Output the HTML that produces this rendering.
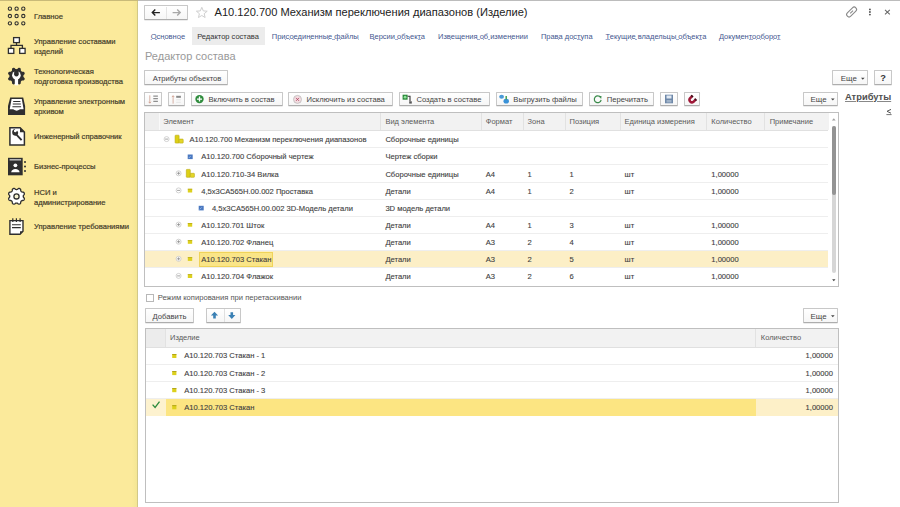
<!DOCTYPE html><html><head><meta charset="utf-8"><style>
*{box-sizing:border-box;margin:0;padding:0}
html,body{width:900px;height:507px;overflow:hidden;background:#fff;font-family:"Liberation Sans",sans-serif;font-size:7.5px;color:#333}
.a{position:absolute;white-space:nowrap}
svg{position:absolute;overflow:visible}
.st{position:absolute;left:34px;color:#3b3626;-webkit-text-stroke:.2px #4a4530;font-size:7.6px;line-height:9.5px;white-space:nowrap}
.btn{position:absolute;border:1px solid #c8c8c8;border-bottom-color:#adadad;border-radius:1px;background:linear-gradient(#fff,#f6f6f6);box-shadow:0 .6px .6px rgba(0,0,0,.15);color:#444;white-space:nowrap}
.lnk{position:absolute;color:#44578f;text-decoration:underline;text-decoration-color:#9eabcf;text-underline-offset:.35px;text-decoration-thickness:.7px;white-space:nowrap}
.tbl{position:absolute;border:1px solid #bfbfbf;background:#fff;overflow:hidden}
.hc{position:absolute;height:18px;line-height:18px;color:#5a5a5a;white-space:nowrap}
.vs{position:absolute;width:1px;background:#e2e2e2}
.hs{position:absolute;height:1px;background:#eeeeee}
.c{position:absolute;color:#3a3a3a;-webkit-text-stroke:.12px #555;white-space:nowrap;line-height:10px;font-size:7.6px}
</style></head><body>
<div class="a" style="left:0;top:0;width:900px;height:1.2px;background:#bcbcbc"></div>
<div class="a" style="left:0;top:0;width:138px;height:1.2px;background:#c9ba78"></div>
<div class="a" style="left:0;top:1px;width:137px;height:506px;background:#fbea9b"></div>
<div class="a" style="left:132px;top:1px;width:5px;height:506px;background:linear-gradient(90deg,#fbea9b,#f4e694)"></div>
<div class="a" style="left:137px;top:1px;width:1px;height:506px;background:#d2c888"></div>
<div class="st" style="top:12.2px">Главное</div>
<div class="st" style="top:37.4px">Управление составами<br>изделий</div>
<div class="st" style="top:67.4px">Технологическая<br>подготовка производства</div>
<div class="st" style="top:97.4px">Управление электронным<br>архивом</div>
<div class="st" style="top:131.8px">Инженерный справочник</div>
<div class="st" style="top:162.2px">Бизнес-процессы</div>
<div class="st" style="top:188.4px">НСИ и<br>администрирование</div>
<div class="st" style="top:222.3px">Управление требованиями</div>

<svg style="left:0;top:0" width="40" height="240" viewBox="0 0 40 240">
 <g fill="none" stroke="#2f2f2f" stroke-width="1.05">
  <circle cx="9.9" cy="8.7" r="1.65"/><circle cx="16.6" cy="8.7" r="1.65"/><circle cx="23.3" cy="8.7" r="1.65"/>
  <circle cx="9.9" cy="16" r="1.65"/><circle cx="16.6" cy="16" r="1.65"/><circle cx="23.3" cy="16" r="1.65"/>
  <circle cx="9.9" cy="23.3" r="1.65"/><circle cx="16.6" cy="23.3" r="1.65"/><circle cx="23.3" cy="23.3" r="1.65"/>
 </g>
 <g stroke="#2f2f2f" stroke-width="1.3" fill="#fff">
  <rect x="13.6" y="37.6" width="5.8" height="5"/>
  <rect x="8.4" y="48.4" width="5.4" height="5"/>
  <rect x="19.7" y="48.4" width="5.4" height="5"/>
  <path d="M16.5 42.6V45.4M11 48.4V45.4H22.4V48.4" fill="none"/>
 </g>
 <path fill="#2f2f2f" d="M23.35 76.10L23.37 76.37L23.44 76.65L23.56 76.95L23.74 77.26L24.15 77.64L24.54 78.05L24.67 78.43L24.71 78.80L24.68 79.15L24.58 79.49L24.41 79.79L24.18 80.07L23.90 80.30L23.54 80.47L22.97 80.49L22.41 80.47L22.06 80.56L21.77 80.69L21.52 80.84L21.31 81.01L21.14 81.22L20.99 81.47L20.86 81.76L20.77 82.11L20.79 82.67L20.77 83.24L20.60 83.60L20.37 83.88L20.09 84.11L19.79 84.28L19.45 84.38L19.10 84.41L18.73 84.37L18.35 84.24L17.94 83.85L17.56 83.44L17.25 83.26L16.95 83.14L16.67 83.07L16.40 83.05L16.13 83.07L15.85 83.14L15.55 83.26L15.24 83.44L14.86 83.85L14.45 84.24L14.07 84.37L13.70 84.41L13.35 84.38L13.01 84.28L12.71 84.11L12.43 83.88L12.20 83.60L12.03 83.24L12.01 82.67L12.03 82.11L11.94 81.76L11.81 81.47L11.66 81.22L11.49 81.01L11.28 80.84L11.03 80.69L10.74 80.56L10.39 80.47L9.83 80.49L9.26 80.47L8.90 80.30L8.62 80.07L8.39 79.79L8.22 79.49L8.12 79.15L8.09 78.80L8.13 78.43L8.26 78.05L8.65 77.64L9.06 77.26L9.24 76.95L9.36 76.65L9.43 76.37L9.45 76.10L9.43 75.83L9.36 75.55L9.24 75.25L9.06 74.94L8.65 74.56L8.26 74.15L8.13 73.77L8.09 73.40L8.12 73.05L8.22 72.71L8.39 72.41L8.62 72.13L8.90 71.90L9.26 71.73L9.83 71.71L10.39 71.73L10.74 71.64L11.03 71.51L11.28 71.36L11.49 71.19L11.66 70.98L11.81 70.73L11.94 70.44L12.03 70.09L12.01 69.53L12.03 68.96L12.20 68.60L12.43 68.32L12.71 68.09L13.01 67.92L13.35 67.82L13.70 67.79L14.07 67.83L14.45 67.96L14.86 68.35L15.24 68.76L15.55 68.94L15.85 69.06L16.13 69.13L16.40 69.15L16.67 69.13L16.95 69.06L17.25 68.94L17.56 68.76L17.94 68.35L18.35 67.96L18.73 67.83L19.10 67.79L19.45 67.82L19.79 67.92L20.09 68.09L20.37 68.32L20.60 68.60L20.77 68.96L20.79 69.53L20.77 70.09L20.86 70.44L20.99 70.73L21.14 70.98L21.31 71.19L21.52 71.36L21.77 71.51L22.06 71.64L22.41 71.73L22.97 71.71L23.54 71.73L23.90 71.90L24.18 72.13L24.41 72.41L24.58 72.71L24.68 73.05L24.71 73.40L24.67 73.77L24.54 74.15L24.15 74.56L23.74 74.94L23.56 75.25L23.44 75.55L23.37 75.83z"/>
 <circle cx="16.4" cy="75.3" r="4.3" fill="#fff"/><circle cx="16.4" cy="74.3" r="2.2" fill="#2f2f2f"/><rect x="14.2" y="69.5" width="4.4" height="4.8" fill="#2f2f2f"/><rect x="14.8" y="77" width="3.3" height="8.3" fill="#fff"/>
 <path fill="#2f2f2f" d="M10.2 97.6h13l1.9 8.5v8.8H8v-8.8z"/>
 <path fill="#fff" d="M11.6 99h10.2l1.8 10.2H9.7z"/>
 <path stroke="#2f2f2f" stroke-width="1.05" d="M13.2 101.4h7.2M12.8 104h8M12.4 106.7h8.7"/>
 <path fill="#fff" d="M13.6 109.1h6v.5q-3 2.2-6 0z"/>
 <path fill="#fff" stroke="#2f2f2f" stroke-width="1.5" d="M9.9 127.8h10.2l4.3 4.3v12.8H9.9z"/>
 <path fill="#2f2f2f" d="M20 127.8l4.4 4.4h-4.4z"/>
 <path fill="none" stroke="#2f2f2f" stroke-width="1.9" d="M16 134.2l5.6 5.9"/>
 <path fill="#2f2f2f" d="M12.2 132.4a3 3 0 0 0 4.6 2.8a3 3 0 0 0 0.4-4.4l-1.4 1.5-1.6-.3-.3-1.5 1.4-1.5a3 3 0 0 0-3.1 3.4z"/>
 <rect x="8" y="157.8" width="14.7" height="17.5" fill="#2f2f2f"/>
 <rect x="9.6" y="159.3" width="11.5" height="1.1" fill="#eee"/>
 <circle cx="15.4" cy="165.3" r="1.9" fill="#fff"/>
 <path fill="#fff" d="M11.2 172.2q.5-3 4.2-3.2 3.7.2 4.2 3.2z"/>
 <circle cx="25" cy="162" r="1" fill="#2f2f2f"/><circle cx="25" cy="166.5" r="1" fill="#2f2f2f"/><circle cx="25" cy="170.9" r="1" fill="#2f2f2f"/>
 <path fill="#fff" stroke="#2f2f2f" stroke-width="1.3" d="M23.25 196.30L23.27 196.57L23.32 196.84L23.42 197.12L23.57 197.42L23.90 197.77L24.23 198.15L24.33 198.51L24.35 198.85L24.31 199.18L24.21 199.50L24.06 199.79L23.85 200.05L23.59 200.27L23.27 200.45L22.78 200.49L22.29 200.51L21.97 200.61L21.71 200.75L21.47 200.90L21.27 201.07L21.10 201.27L20.95 201.51L20.81 201.77L20.71 202.09L20.69 202.58L20.65 203.07L20.47 203.39L20.25 203.65L19.99 203.86L19.70 204.01L19.38 204.11L19.05 204.15L18.71 204.13L18.35 204.03L17.97 203.70L17.62 203.37L17.32 203.22L17.04 203.12L16.77 203.07L16.50 203.05L16.23 203.07L15.96 203.12L15.68 203.22L15.38 203.37L15.03 203.70L14.65 204.03L14.29 204.13L13.95 204.15L13.62 204.11L13.30 204.01L13.01 203.86L12.75 203.65L12.53 203.39L12.35 203.07L12.31 202.58L12.29 202.09L12.19 201.77L12.05 201.51L11.90 201.27L11.73 201.07L11.53 200.90L11.29 200.75L11.03 200.61L10.71 200.51L10.22 200.49L9.73 200.45L9.41 200.27L9.15 200.05L8.94 199.79L8.79 199.50L8.69 199.18L8.65 198.85L8.67 198.51L8.77 198.15L9.10 197.77L9.43 197.42L9.58 197.12L9.68 196.84L9.73 196.57L9.75 196.30L9.73 196.03L9.68 195.76L9.58 195.48L9.43 195.18L9.10 194.83L8.77 194.45L8.67 194.09L8.65 193.75L8.69 193.42L8.79 193.10L8.94 192.81L9.15 192.55L9.41 192.33L9.73 192.15L10.22 192.11L10.71 192.09L11.03 191.99L11.29 191.85L11.53 191.70L11.73 191.53L11.90 191.33L12.05 191.09L12.19 190.83L12.29 190.51L12.31 190.02L12.35 189.53L12.53 189.21L12.75 188.95L13.01 188.74L13.30 188.59L13.62 188.49L13.95 188.45L14.29 188.47L14.65 188.57L15.03 188.90L15.38 189.23L15.68 189.38L15.96 189.48L16.23 189.53L16.50 189.55L16.77 189.53L17.04 189.48L17.32 189.38L17.62 189.23L17.97 188.90L18.35 188.57L18.71 188.47L19.05 188.45L19.38 188.49L19.70 188.59L19.99 188.74L20.25 188.95L20.47 189.21L20.65 189.53L20.69 190.02L20.71 190.51L20.81 190.83L20.95 191.09L21.10 191.33L21.27 191.53L21.47 191.70L21.71 191.85L21.97 191.99L22.29 192.09L22.78 192.11L23.27 192.15L23.59 192.33L23.85 192.55L24.06 192.81L24.21 193.10L24.31 193.42L24.35 193.75L24.33 194.09L24.23 194.45L23.90 194.83L23.57 195.18L23.42 195.48L23.32 195.76L23.27 196.03z"/>
 <circle cx="16.5" cy="196.4" r="2.6" fill="#f5f2d0" stroke="#2f2f2f" stroke-width="1.3"/>
 <path fill="#fff" stroke="#2f2f2f" stroke-width="1.4" d="M9.9 220.6h13.1v10.6l-3 3h-10.1z"/>
 <path fill="#2f2f2f" d="M23 231.2l-3 3v-3z"/>
 <path stroke="#2f2f2f" stroke-width="1.2" d="M12.8 218.3v3.6M16.4 218.3v3.6M20.1 218.3v3.6"/>
 <path stroke="#2f2f2f" stroke-width="1.1" d="M12 224.8h8.8M12 227.6h8.8"/>
</svg>
<div class="btn" style="left:144.2px;top:5.2px;width:43.8px;height:14.4px;border-radius:1px"></div>
<div class="a" style="left:166px;top:6.5px;width:1px;height:12px;background:#e4e4e4"></div>
<svg style="left:0;top:0" width="900" height="30">
 <path d="M152.3 12.6h7.6M155.3 9.6l-3 3 3 3" fill="none" stroke="#222" stroke-width="1.4"/>
 <path d="M172.6 12.6h7.6M177.2 9.6l3 3-3 3" fill="none" stroke="#a8a8a8" stroke-width="1.4"/>
 <path d="M201.8 7.3l1.5 3.6 3.9.3-3 2.5.9 3.8-3.3-2-3.3 2 .9-3.8-3-2.5 3.9-.3z" fill="none" stroke="#cfcfcf" stroke-width="1"/>
 <g fill="none" stroke="#888" stroke-width="1.05" transform="rotate(-45 851.6 12)">
  <rect x="845.6" y="9.6" width="12" height="4.8" rx="2.4"/>
  <path d="M849.6 12h4"/>
 </g>
 <g fill="#555"><circle cx="869.9" cy="9.4" r=".95"/><circle cx="869.9" cy="12" r=".95"/><circle cx="869.9" cy="14.6" r=".95"/></g>
 <path d="M885 9.8l4.8 4.6M889.8 9.8l-4.8 4.6" stroke="#666" stroke-width="1.05"/>
</svg>
<div class="a" style="left:214.5px;top:6.3px;font-size:11.1px;line-height:13px;color:#222">A10.120.700 Механизм переключения диапазонов (Изделие)</div>
<div class="a" style="left:191.6px;top:26.8px;width:73px;height:18.6px;background:#ececec"></div>
<div class="a" style="left:197.2px;top:31.6px;line-height:10px;color:#333">Редактор состава</div>
<div class="lnk" style="left:150.7px;top:31.5px;line-height:10px">Основное</div>
<div class="lnk" style="left:271.8px;top:31.5px;line-height:10px">Присоединенные файлы</div>
<div class="lnk" style="left:369.5px;top:31.5px;line-height:10px">Версии объекта</div>
<div class="lnk" style="left:438.0px;top:31.5px;line-height:10px">Извещения об изменении</div>
<div class="lnk" style="left:540.9px;top:31.5px;line-height:10px">Права доступа</div>
<div class="lnk" style="left:605.6px;top:31.5px;line-height:10px">Текущие владельцы объекта</div>
<div class="lnk" style="left:718.9px;top:31.5px;line-height:10px">Документооборот</div>
<div class="a" style="left:145px;top:50.3px;font-size:11px;line-height:13px;color:#999">Редактор состава</div>
<div class="btn" style="left:144.3px;top:70.3px;width:84.2px;height:15.2px"></div><div class="a" style="left:152.8px;top:73.7px;line-height:10px;color:#444;font-size:7.65px;">Атрибуты объектов</div>
<div class="btn" style="left:832.1px;top:70.3px;width:36.2px;height:15.0px"></div><div class="a" style="left:840.8px;top:73.6px;line-height:10px;color:#444;font-size:7.9px;">Еще</div>
<svg style="left:0;top:0" width="900" height="507"><path d="M861.0 77.8h3.6l-1.8 2.0z" fill="#444"/></svg>
<div class="btn" style="left:874.2px;top:70.3px;width:17.5px;height:15.0px"></div>
<div class="a" style="left:880.3px;top:72.6px;font-weight:bold;font-size:9.3px;line-height:10px;color:#333">?</div>
<div class="btn" style="left:144.3px;top:91.6px;width:17.5px;height:14.8px"></div>
<div class="btn" style="left:168.0px;top:91.6px;width:16.8px;height:14.8px"></div>
<div class="btn" style="left:191.2px;top:91.6px;width:92.3px;height:14.8px"></div><div class="a" style="left:208.4px;top:94.8px;line-height:10px;color:#444;font-size:7.65px;">Включить в состав</div>
<div class="btn" style="left:288.2px;top:91.6px;width:104.4px;height:14.8px"></div><div class="a" style="left:306.5px;top:94.8px;line-height:10px;color:#444;font-size:7.65px;">Исключить из состава</div>
<div class="btn" style="left:399.2px;top:91.6px;width:90.6px;height:14.8px"></div><div class="a" style="left:416.4px;top:94.8px;line-height:10px;color:#444;font-size:7.65px;">Создать в составе</div>
<div class="btn" style="left:495.7px;top:91.6px;width:87.6px;height:14.8px"></div><div class="a" style="left:513.3px;top:94.8px;line-height:10px;color:#444;font-size:7.65px;">Выгрузить файлы</div>
<div class="btn" style="left:588.7px;top:91.6px;width:65.6px;height:14.8px"></div><div class="a" style="left:606.7px;top:94.8px;line-height:10px;color:#444;font-size:7.65px;">Перечитать</div>
<div class="btn" style="left:660.3px;top:91.6px;width:17.4px;height:14.8px"></div>
<div class="btn" style="left:683.7px;top:91.6px;width:16.6px;height:14.8px"></div>
<div class="btn" style="left:802.8px;top:91.6px;width:35.4px;height:14.8px"></div><div class="a" style="left:810.5px;top:94.8px;line-height:10px;color:#444;font-size:7.9px;">Еще</div>
<svg style="left:0;top:0" width="900" height="507"><path d="M831.0 98.6h3.6l-1.8 2.0z" fill="#444"/></svg>
<div class="a" style="left:845px;top:92.2px;font-weight:bold;font-size:9.35px;line-height:11px;color:#505050;text-decoration:underline;text-decoration-color:#888">Атрибуты</div>
<svg style="left:0;top:0" width="900" height="120"><path d="M891 109.4l-4 1.9 4 1.9" fill="none" stroke="#555" stroke-width="1"/><path d="M886.4 114.6h5.2" stroke="#666" stroke-width=".9"/></svg>
<svg style="left:0;top:0" width="900" height="120">
 <path d="M149.8 95.3v7.8M148.6 101.8l1.2 1.4 1.2-1.4" fill="none" stroke="#c89080" stroke-width=".7"/>
 <path d="M153.3 96.1h4.6M153.3 98.7h4.6M153.3 101.3h4.6" stroke="#8f8f8f" stroke-width="1.2"/>
 <path d="M173.1 103.6v-7.8M171.9 97.1l1.2-1.4 1.2 1.4" fill="none" stroke="#c89080" stroke-width=".7"/>
 <path d="M176.2 96.8h4.7" stroke="#888" stroke-width="2"/>
 <path d="M176.2 99.8h4.7M176.2 102.3h4.7" stroke="#e2e2e2" stroke-width=".9"/>
 <circle cx="199.5" cy="99.1" r="4.2" fill="#2e8c3c"/>
 <path d="M199.5 96.6v5M197 99.1h5" stroke="#fff" stroke-width="1.3"/>
 <circle cx="297.5" cy="99.4" r="4" fill="#f3dce0" stroke="#bbb" stroke-width=".8"/>
 <path d="M296 97.9l3 3M299 97.9l-3 3" stroke="#b04060" stroke-width=".8"/>
 <rect x="402.6" y="94.7" width="5" height="5" fill="#2a8a3a"/>
 <circle cx="405.1" cy="97.2" r="1.4" fill="#8fe09a"/>
 <path d="M407.6 96.2h2.4v5" fill="none" stroke="#333" stroke-width="1.1"/>
 <rect x="409.2" y="101.3" width="2.6" height="2.3" fill="#555"/>
 <ellipse cx="501.6" cy="96.8" rx="2.4" ry="2" fill="#4a9ad8"/>
 <ellipse cx="506.2" cy="101.2" rx="2.7" ry="2.4" fill="#3a92d8"/>
 <path d="M506.2 99.5v-3.6" stroke="#3a9a48" stroke-width="1.4"/>
 <path d="M600.5 97.3a3.4 3.4 0 1 0 .6 2.5" fill="none" stroke="#3a8a4a" stroke-width="1.2"/>
 <path d="M599 95.8l2.6.5-.5 2.6z" fill="#3a8a4a"/>
 <rect x="665" y="94.7" width="8" height="8.6" fill="#6d87a8"/>
 <rect x="666.5" y="95.5" width="5" height="3" fill="#dfe8f2"/>
 <rect x="666.5" y="100" width="5" height="2.5" fill="#9fb2c8"/>
 <path d="M692.6 95.6L690 98.3a2.5 2.5 0 0 0 3.5 3.5l2.6-2.7" fill="none" stroke="#a01838" stroke-width="2.5"/><path d="M692.6 95.6l-1 1M696.1 99.1l-1 1" stroke="#3a1018" stroke-width="2.5"/>
</svg>
<div class="tbl" style="left:144.4px;top:112.2px;width:694.5px;height:174.8px"></div>
<div class="a" style="left:145.4px;top:113.2px;width:683.4px;height:17.3px;background:#f2f2f2"></div>
<div class="a" style="left:145.4px;top:113.2px;width:13.5px;height:17.3px;background:#eeeeee"></div>
<div class="a" style="left:145.4px;top:130px;width:683px;height:1px;background:#e0e0e0"></div>
<div class="vs" style="left:159.0px;top:113.2px;height:17px;background:#f9f9f9"></div>
<div class="hc" style="left:163.3px;top:112.7px">Элемент</div>
<div class="vs" style="left:379.7px;top:113.2px;height:17px;"></div>
<div class="hc" style="left:385.4px;top:112.7px">Вид элемента</div>
<div class="vs" style="left:480.8px;top:113.2px;height:17px;"></div>
<div class="hc" style="left:485.7px;top:112.7px">Формат</div>
<div class="vs" style="left:522.7px;top:113.2px;height:17px;"></div>
<div class="hc" style="left:527.6px;top:112.7px">Зона</div>
<div class="vs" style="left:564.6px;top:113.2px;height:17px;"></div>
<div class="hc" style="left:569.5px;top:112.7px">Позиция</div>
<div class="vs" style="left:619.7px;top:113.2px;height:17px;"></div>
<div class="hc" style="left:624.6px;top:112.7px">Единица измерения</div>
<div class="vs" style="left:706.4px;top:113.2px;height:17px;"></div>
<div class="hc" style="left:711.3px;top:112.7px">Количество</div>
<div class="vs" style="left:764.2px;top:113.2px;height:17px;"></div>
<div class="hc" style="left:769.7px;top:112.7px">Примечание</div>
<div class="vs" style="left:828.5px;top:113.2px;height:17px;"></div>
<div class="hs" style="left:145.4px;top:147.2px;width:683px"></div>
<div class="c" style="left:189.4px;top:135.3px">A10.120.700 Механизм переключения диапазонов</div>
<div class="c" style="left:385.4px;top:135.3px">Сборочные единицы</div>
<div class="hs" style="left:145.4px;top:164.3px;width:683px"></div>
<div class="c" style="left:201.2px;top:152.4px">A10.120.700 Сборочный чертеж</div>
<div class="c" style="left:385.4px;top:152.4px">Чертеж сборки</div>
<div class="hs" style="left:145.4px;top:181.5px;width:683px"></div>
<div class="c" style="left:201.2px;top:169.5px">A10.120.710-34 Вилка</div>
<div class="c" style="left:385.4px;top:169.5px">Сборочные единицы</div>
<div class="c" style="left:485.7px;top:169.5px">A4</div>
<div class="c" style="left:527.6px;top:169.5px">1</div>
<div class="c" style="left:569.5px;top:169.5px">1</div>
<div class="c" style="left:624.6px;top:169.5px">шт</div>
<div class="c" style="left:711.3px;top:169.5px">1,00000</div>
<div class="hs" style="left:145.4px;top:198.6px;width:683px"></div>
<div class="c" style="left:201.2px;top:186.6px">4,5x3CA565H.00.002 Проставка</div>
<div class="c" style="left:385.4px;top:186.6px">Детали</div>
<div class="c" style="left:485.7px;top:186.6px">A4</div>
<div class="c" style="left:527.6px;top:186.6px">1</div>
<div class="c" style="left:569.5px;top:186.6px">2</div>
<div class="c" style="left:624.6px;top:186.6px">шт</div>
<div class="c" style="left:711.3px;top:186.6px">1,00000</div>
<div class="hs" style="left:145.4px;top:215.7px;width:683px"></div>
<div class="c" style="left:211.9px;top:203.7px">4,5x3CA565H.00.002 3D-Модель детали</div>
<div class="c" style="left:385.4px;top:203.7px">3D модель детали</div>
<div class="hs" style="left:145.4px;top:232.8px;width:683px"></div>
<div class="c" style="left:201.2px;top:220.8px">A10.120.701 Шток</div>
<div class="c" style="left:385.4px;top:220.8px">Детали</div>
<div class="c" style="left:485.7px;top:220.8px">A4</div>
<div class="c" style="left:527.6px;top:220.8px">1</div>
<div class="c" style="left:569.5px;top:220.8px">3</div>
<div class="c" style="left:624.6px;top:220.8px">шт</div>
<div class="c" style="left:711.3px;top:220.8px">1,00000</div>
<div class="hs" style="left:145.4px;top:249.8px;width:683px"></div>
<div class="c" style="left:201.2px;top:237.9px">A10.120.702 Фланец</div>
<div class="c" style="left:385.4px;top:237.9px">Детали</div>
<div class="c" style="left:485.7px;top:237.9px">A3</div>
<div class="c" style="left:527.6px;top:237.9px">2</div>
<div class="c" style="left:569.5px;top:237.9px">4</div>
<div class="c" style="left:624.6px;top:237.9px">шт</div>
<div class="c" style="left:711.3px;top:237.9px">1,00000</div>
<div class="a" style="left:145.4px;top:250.9px;width:683px;height:16.6px;background:#fcefc6"></div>
<div class="a" style="left:198.5px;top:251.9px;width:74.5px;height:15px;background:#fae587;border:1px solid #efd35a"></div>
<div class="hs" style="left:145.4px;top:267.0px;width:683px"></div>
<div class="c" style="left:201.2px;top:255.0px">A10.120.703 Стакан</div>
<div class="c" style="left:385.4px;top:255.0px">Детали</div>
<div class="c" style="left:485.7px;top:255.0px">A3</div>
<div class="c" style="left:527.6px;top:255.0px">2</div>
<div class="c" style="left:569.5px;top:255.0px">5</div>
<div class="c" style="left:624.6px;top:255.0px">шт</div>
<div class="c" style="left:711.3px;top:255.0px">1,00000</div>
<div class="c" style="left:201.2px;top:272.1px">A10.120.704 Флажок</div>
<div class="c" style="left:385.4px;top:272.1px">Детали</div>
<div class="c" style="left:485.7px;top:272.1px">A3</div>
<div class="c" style="left:527.6px;top:272.1px">2</div>
<div class="c" style="left:569.5px;top:272.1px">6</div>
<div class="c" style="left:624.6px;top:272.1px">шт</div>
<div class="c" style="left:711.3px;top:272.1px">1,00000</div>
<svg style="left:0;top:0" width="900" height="300">
<circle cx="166.6" cy="139.1" r="2.5" fill="#fff" stroke="#c4c4c4" stroke-width=".75"/>
<path d="M165.1 139.1h3" stroke="#8c8c8c" stroke-width=".8"/>
<g transform="translate(179.2 139.3)"><rect x="-4.1" y="-4.1" width="4" height="7.9" rx=".6" fill="#ddd015" stroke="#b8aa10" stroke-width=".6"/><rect x="-0.1" y="-0.2" width="4.1" height="4" rx=".6" fill="#e4d628" stroke="#b8aa10" stroke-width=".6"/></g>
<rect x="187.7" y="154.5" width="5" height="4.6" fill="#4a78c0"/><path d="M188.7 158.1l2 -2" stroke="#9ec0ee" stroke-width=".8"/>
<circle cx="178.6" cy="173.3" r="2.5" fill="#fff" stroke="#c4c4c4" stroke-width=".75"/>
<path d="M177.1 173.3h3" stroke="#8c8c8c" stroke-width=".8"/>
<path d="M178.6 171.8v3" stroke="#8c8c8c" stroke-width=".8"/>
<g transform="translate(190.4 173.5)"><rect x="-4.1" y="-4.1" width="4" height="7.9" rx=".6" fill="#ddd015" stroke="#b8aa10" stroke-width=".6"/><rect x="-0.1" y="-0.2" width="4.1" height="4" rx=".6" fill="#e4d628" stroke="#b8aa10" stroke-width=".6"/></g>
<circle cx="178.6" cy="190.4" r="2.5" fill="#fff" stroke="#c4c4c4" stroke-width=".75"/>
<path d="M177.1 190.4h3" stroke="#8c8c8c" stroke-width=".8"/>
<rect x="187.8" y="188.8" width="4.4" height="3.7" fill="#ddd01e"/><rect x="187.8" y="188.8" width="4.4" height=".7" fill="#b4a614"/>
<rect x="198.7" y="205.8" width="5" height="4.6" fill="#4a78c0"/><path d="M199.7 209.4l2 -2" stroke="#9ec0ee" stroke-width=".8"/>
<circle cx="178.6" cy="224.6" r="2.5" fill="#fff" stroke="#c4c4c4" stroke-width=".75"/>
<path d="M177.1 224.6h3" stroke="#8c8c8c" stroke-width=".8"/>
<path d="M178.6 223.1v3" stroke="#8c8c8c" stroke-width=".8"/>
<rect x="187.8" y="223.0" width="4.4" height="3.7" fill="#ddd01e"/><rect x="187.8" y="223.0" width="4.4" height=".7" fill="#b4a614"/>
<circle cx="178.6" cy="241.7" r="2.5" fill="#fff" stroke="#c4c4c4" stroke-width=".75"/>
<path d="M177.1 241.7h3" stroke="#8c8c8c" stroke-width=".8"/>
<path d="M178.6 240.2v3" stroke="#8c8c8c" stroke-width=".8"/>
<rect x="187.8" y="240.1" width="4.4" height="3.7" fill="#ddd01e"/><rect x="187.8" y="240.1" width="4.4" height=".7" fill="#b4a614"/>
<circle cx="178.6" cy="258.8" r="2.5" fill="#fff" stroke="#c4c4c4" stroke-width=".75"/>
<path d="M177.1 258.8h3" stroke="#8c8c8c" stroke-width=".8"/>
<path d="M178.6 257.3v3" stroke="#8c8c8c" stroke-width=".8"/>
<rect x="187.8" y="257.2" width="4.4" height="3.7" fill="#ddd01e"/><rect x="187.8" y="257.2" width="4.4" height=".7" fill="#b4a614"/>
<circle cx="178.6" cy="275.9" r="2.5" fill="#fff" stroke="#c4c4c4" stroke-width=".75"/>
<path d="M177.1 275.9h3" stroke="#8c8c8c" stroke-width=".8"/>
<rect x="187.8" y="274.3" width="4.4" height="3.7" fill="#ddd01e"/><rect x="187.8" y="274.3" width="4.4" height=".7" fill="#b4a614"/>
</svg>
<div class="a" style="left:829px;top:113.2px;width:8.9px;height:172.8px;background:#fff"></div>
<div class="a" style="left:831.8px;top:126.3px;width:4.2px;height:147px;background:#d6d6d6;border-radius:2.1px"></div>
<div class="a" style="left:831.8px;top:126.3px;width:4.2px;height:68.7px;background:#939393;border-radius:2.1px"></div>
<svg style="left:0;top:0" width="900" height="507"><path d="M831.9 120.6h3.8l-1.9-2.3z" fill="#a0a0a0"/></svg>
<svg style="left:0;top:0" width="900" height="507"><path d="M832.1 279.2h3.4l-1.7 2.1z" fill="#444"/></svg>
<div class="a" style="left:145.5px;top:293.7px;width:8px;height:8px;border:1px solid #b8b8b8;background:#fff"></div>
<div class="a" style="left:157.7px;top:292.8px;line-height:10px;color:#555;font-size:7.6px">Режим копирования при перетаскивании</div>
<div class="btn" style="left:144.7px;top:308.4px;width:49.0px;height:14.6px"></div><div class="a" style="left:152.6px;top:311.5px;line-height:10px;color:#444;font-size:7.65px;">Добавить</div>
<div class="btn" style="left:206.3px;top:308.4px;width:34.7px;height:14.6px"></div>
<div class="a" style="left:224px;top:309.4px;width:1px;height:12.6px;background:#e0e0e0"></div>
<svg style="left:0;top:0" width="900" height="340">
 <path d="M214.5 311.8l-3.6 3.8h2.3v2.9h2.6v-2.9h2.3z" fill="#3a80b4"/>
 <path d="M231.8 318.9l-3.6-3.8h2.3v-2.9h2.6v2.9h2.3z" fill="#3a80b4"/>
</svg>
<div class="btn" style="left:802.7px;top:308.3px;width:35.5px;height:14.7px"></div><div class="a" style="left:810.5px;top:311.5px;line-height:10px;color:#444;font-size:7.9px;">Еще</div>
<svg style="left:0;top:0" width="900" height="507"><path d="M831.0 315.3h3.6l-1.8 2.0z" fill="#444"/></svg>
<div class="tbl" style="left:144.5px;top:328.4px;width:694px;height:174.4px"></div>
<div class="a" style="left:145.5px;top:329.4px;width:692px;height:17.6px;background:#f2f2f2"></div>
<div class="a" style="left:145.5px;top:329.4px;width:20px;height:17.6px;background:#ececec"></div>
<div class="a" style="left:145.5px;top:346.8px;width:692px;height:1px;background:#e0e0e0"></div>
<div class="vs" style="left:165.3px;top:329.4px;height:17.4px"></div>
<div class="vs" style="left:755.4px;top:329.4px;height:17.4px"></div>
<div class="hc" style="left:170px;top:329.3px">Изделие</div>
<div class="hc" style="left:760.8px;top:329.3px">Количество</div>
<div class="hs" style="left:145.5px;top:364.2px;width:692px"></div>
<div class="c" style="left:184.2px;top:351.4px">A10.120.703 Стакан - 1</div>
<div class="c" style="left:755px;top:351.4px;width:78px;text-align:right">1,00000</div>
<div class="hs" style="left:145.5px;top:381.3px;width:692px"></div>
<div class="c" style="left:184.2px;top:368.5px">A10.120.703 Стакан - 2</div>
<div class="c" style="left:755px;top:368.5px;width:78px;text-align:right">1,00000</div>
<div class="hs" style="left:145.5px;top:398.4px;width:692px"></div>
<div class="c" style="left:184.2px;top:385.6px">A10.120.703 Стакан - 3</div>
<div class="c" style="left:755px;top:385.6px;width:78px;text-align:right">1,00000</div>
<div class="a" style="left:145.5px;top:398.9px;width:20px;height:17.1px;background:#fdf2cf"></div>
<div class="a" style="left:165.5px;top:398.9px;width:590px;height:17.1px;background:#fce582"></div>
<div class="a" style="left:755.5px;top:398.9px;width:82px;height:17.1px;background:#fdf0c8"></div>
<div class="c" style="left:184.2px;top:402.7px">A10.120.703 Стакан</div>
<div class="c" style="left:755px;top:402.7px;width:78px;text-align:right">1,00000</div>
<svg style="left:0;top:0" width="900" height="507">
<rect x="172.2" y="354.0" width="4.2" height="4" fill="#dcd01c"/><rect x="172.2" y="354.0" width="4.2" height=".8" fill="#a89a10"/>
<rect x="172.2" y="371.1" width="4.2" height="4" fill="#dcd01c"/><rect x="172.2" y="371.1" width="4.2" height=".8" fill="#a89a10"/>
<rect x="172.2" y="388.2" width="4.2" height="4" fill="#dcd01c"/><rect x="172.2" y="388.2" width="4.2" height=".8" fill="#a89a10"/>
<path d="M152.6 404.6l2.5 2.9 4.4-5.9" fill="none" stroke="#2e8b3e" stroke-width="1.3"/>
<rect x="172.2" y="405.3" width="4.2" height="4" fill="#dcd01c"/><rect x="172.2" y="405.3" width="4.2" height=".8" fill="#a89a10"/>
</svg>
</body></html>
